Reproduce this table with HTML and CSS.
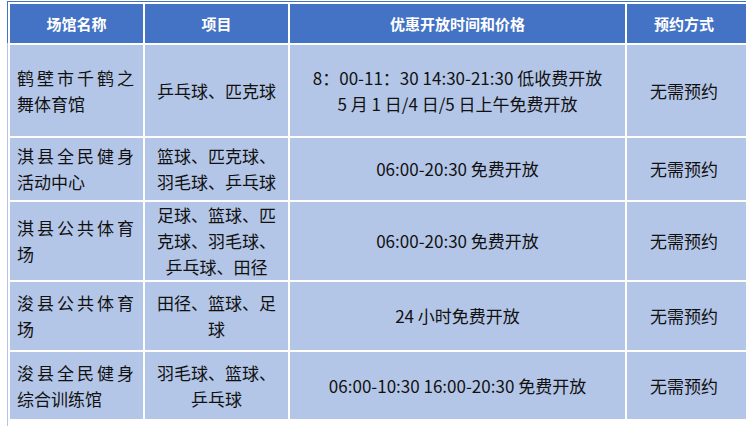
FILE: index.html
```html
<!DOCTYPE html>
<html lang="zh-CN">
<head>
<meta charset="utf-8">
<title>场馆开放信息</title>
<link rel="stylesheet" href="styles.css">
</head>
<body>
<div class="frame">
  <div class="edge"></div>
  <div class="table">
    <div class="th">场馆名称</div>
    <div class="th">项目</div>
    <div class="th">优惠开放时间和价格</div>
    <div class="th th-last">预约方式</div>

    <div class="td name">鹤壁市千鹤之舞体育馆</div>
    <div class="td item">乒乓球、匹克球</div>
    <div class="td time">8：00-11：30 14:30-21:30 低收费开放<br>5 月 1 日/4 日/5 日上午免费开放</div>
    <div class="td book">无需预约</div>

    <div class="td name">淇县全民健身活动中心</div>
    <div class="td item">篮球、匹克球、羽毛球、乒乓球</div>
    <div class="td time">06:00-20:30 免费开放</div>
    <div class="td book">无需预约</div>

    <div class="td name">淇县公共体育场</div>
    <div class="td item">足球、篮球、匹克球、羽毛球、乒乓球、田径</div>
    <div class="td time">06:00-20:30 免费开放</div>
    <div class="td book">无需预约</div>

    <div class="td name">浚县公共体育场</div>
    <div class="td item">田径、篮球、足球</div>
    <div class="td time">24 小时免费开放</div>
    <div class="td book">无需预约</div>

    <div class="td name">浚县全民健身综合训练馆</div>
    <div class="td item">羽毛球、篮球、乒乓球</div>
    <div class="td time">06:00-10:30 16:00-20:30 免费开放</div>
    <div class="td book">无需预约</div>
  </div>
</div>
</body>
</html>
```

FILE: styles.css
```css
html, body {
  margin: 0;
  padding: 0;
  background: #ffffff;
}

body {
  width: 746px;
  height: 426px;
  overflow: hidden;
  font-family: "Noto Sans CJK SC", "Noto Sans", sans-serif;
  color: #111111;
}

.frame {
  margin: 1px 0 0 7px;
  border-top: 1px solid #4472c4;
  display: flex;
  height: 424px;
}

.edge {
  width: 1px;
  flex: none;
  background: linear-gradient(#4472c4 0, #4472c4 41px, #b4c6e7 41px, #b4c6e7 100%);
}

.table {
  margin: 2px 0 0 2px;
  display: grid;
  grid-template-columns: 133px 143px 335px 119px;
  grid-template-rows: 39px 91px 62px 78px 68px 67px;
  gap: 2px;
  align-self: flex-start;
}

.th {
  background: #4472c4;
  color: #ffffff;
  font-weight: 700;
  font-size: 15px;
  display: flex;
  align-items: center;
  justify-content: center;
}

.th-last {
  padding-right: 5px;
}

.td {
  background: #b4c6e7;
  font-size: 17px;
  line-height: 26px;
  display: flex;
  align-items: center;
}

.name {
  padding: 0 9px 0 7px;
  text-align: justify;
  text-align-last: left;
}

.item {
  padding: 0 10px;
  justify-content: center;
  text-align: center;
}

.time {
  justify-content: center;
  text-align: center;
}

.book {
  justify-content: center;
  padding-right: 5px;
}
```
